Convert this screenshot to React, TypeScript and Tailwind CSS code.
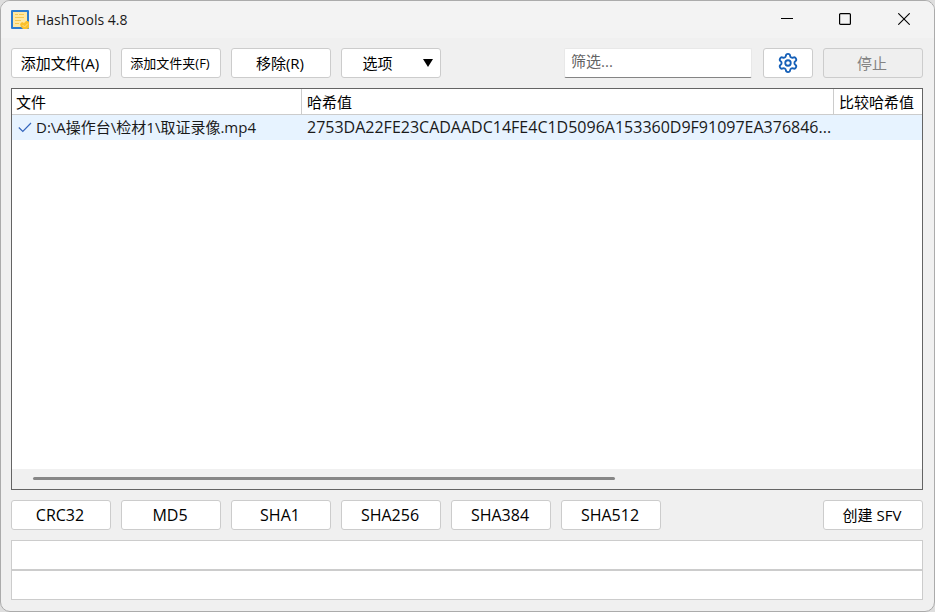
import { useState } from "react"
import type { ButtonHTMLAttributes } from "react"
import { Settings } from "lucide-react"
import { clsx } from "clsx"

type HashRow = {
  file: string
  hash: string
  compare: string
}

const ROWS: HashRow[] = [
  {
    file: "D:\\A操作台\\检材1\\取证录像.mp4",
    hash: "2753DA22FE23CADAADC14FE4C1D5096A153360D9F91097EA376846...",
    compare: "",
  },
]

const ALGORITHMS = ["CRC32", "MD5", "SHA1", "SHA256", "SHA384", "SHA512"]

function PushButton({ className, ...props }: ButtonHTMLAttributes<HTMLButtonElement>) {
  return (
    <button
      type="button"
      className={clsx(
        "flex h-[30px] shrink-0 items-center justify-center rounded-[3px] border border-[#cccccc] bg-white whitespace-nowrap text-black disabled:bg-[#efefef] disabled:text-[#838383]",
        className,
      )}
      {...props}
    />
  )
}

function AppIcon() {
  return (
    <svg viewBox="0 0 20 20" className="h-5 w-5 shrink-0" aria-hidden="true">
      <rect x="0" y="0" width="18" height="19" rx="1" fill="#2b7cd0" />
      <rect x="2" y="2" width="14" height="15" fill="#ffe8a3" />
      <path d="M4 4.500h3M8 4.500h5M4 7.500h9M4 10.500h6M4 13.500h4" stroke="#f7c951" />
      <path d="M9 14l2-2 2 1 2-2h2l1 1v6l-2 1h-4l-2-2z" fill="#fbc02d" />
      <path d="M11.500 15l2 2 3.500-3.500" fill="none" stroke="#ffdf80" />
    </svg>
  )
}

function TitleBar() {
  return (
    <header className="flex h-[37px] shrink-0 items-center bg-[#f3f3f3] pl-[10px]">
      <AppIcon />
      <h1 className="ml-[5px] flex-1 text-[14px] text-[#1a1a1a]">HashTools 4.8</h1>
      <div className="flex h-full pb-px">
        <button type="button" aria-label="最小化" className="flex w-[58px] items-center justify-center">
          <svg viewBox="0 0 12 12" className="h-3 w-3">
            <path d="M0 5.500h12" stroke="#000" />
          </svg>
        </button>
        <button type="button" aria-label="最大化" className="flex w-[58px] items-center justify-center">
          <svg viewBox="0 0 12 12" className="h-3 w-3">
            <rect x="0.600" y="0.600" width="10.800" height="10.800" rx="1" fill="none" stroke="#000" strokeWidth="1.200" />
          </svg>
        </button>
        <button type="button" aria-label="关闭" className="flex w-[60px] items-center justify-center">
          <svg viewBox="0 0 12 12" className="h-3 w-3">
            <path d="M0.300 0.300l11.400 11.400M11.700 0.300L0.300 11.700" stroke="#000" strokeWidth="1.100" />
          </svg>
        </button>
      </div>
    </header>
  )
}

function FileTable() {
  return (
    <div className="flex min-h-[200px] flex-1 flex-col border border-[#646464] bg-white">
      <div className="flex-1 overflow-hidden">
        <table className="w-full table-fixed border-separate border-spacing-0 text-left">
          <colgroup>
            <col className="w-[290px]" />
            <col />
            <col className="w-[88px]" />
          </colgroup>
          <thead>
            <tr className="h-[26px]">
              <th className="border-r border-b border-[#cccccc] px-1 font-normal">文件</th>
              <th className="border-r border-b border-[#cccccc] px-[5px] font-normal">哈希值</th>
              <th className="border-b border-[#cccccc] pl-[5px] font-normal whitespace-nowrap">比较哈希值</th>
            </tr>
          </thead>
          <tbody>
            {ROWS.map((row) => (
              <tr key={row.file} className="h-[25px] bg-[#e7f3ff] text-[#1a1a1a]">
                <td className="pb-0.5 pl-[6px]">
                  <div className="flex items-center gap-1 whitespace-nowrap">
                    <svg viewBox="0 0 14 14" className="h-3.5 w-3.5 shrink-0" aria-hidden="true">
                      <path d="M0.800 7.500l4 4L13 3" fill="none" stroke="#3566bd" strokeWidth="1.200" />
                    </svg>
                    {row.file}
                  </div>
                </td>
                <td className="overflow-hidden pb-0.5 pl-[5px] text-[16px] leading-5 whitespace-nowrap">{row.hash}</td>
                <td className="pb-0.5 pl-[5px]">{row.compare}</td>
              </tr>
            ))}
          </tbody>
        </table>
      </div>
      <div className="flex h-5 shrink-0 items-center bg-[#f0f0f0] px-[21px] pb-0.5">
        <div className="h-[3px] w-[67%] rounded-full bg-[#868686]" />
      </div>
    </div>
  )
}

export default function App() {
  const [filter, setFilter] = useState("")

  return (
    <div className="min-h-screen bg-[#dedede] font-['Open_Sans','Noto_Sans_CJK_SC',sans-serif] text-[15px] leading-5 text-black">
      <div className="flex min-h-screen flex-col overflow-hidden rounded-[10px] border border-[#ababab] bg-[#f0f0f0]">
        <TitleBar />
        <main className="flex flex-1 flex-col gap-[10px] pt-[10px] pr-[11px] pb-[11px] pl-[10px]">
          <div className="flex gap-[10px]">
            <PushButton className="w-[100px] pr-0.5">添加文件(A)</PushButton>
            <PushButton className="w-[100px] pr-0.5 text-[13px]">添加文件夹(F)</PushButton>
            <PushButton className="w-[100px] pr-0.5">移除(R)</PushButton>
            <PushButton className="w-[100px] gap-[30px] pl-[13px]" aria-haspopup="menu">
              选项
              <svg viewBox="0 0 10 8" className="h-2 w-2.5" aria-hidden="true">
                <path d="M0 0h10L5 8z" />
              </svg>
            </PushButton>
            <input
              type="text"
              aria-label="筛选"
              placeholder="筛选..."
              value={filter}
              onChange={(e) => setFilter(e.target.value)}
              className="mr-px ml-auto h-[30px] w-[188px] rounded-[2px] border border-[#e8e8e8] border-b-[#848484] bg-white px-[6px] pb-1 outline-none placeholder:text-[#646464]"
            />
            <PushButton className="w-[50px]" aria-label="设置">
              <Settings className="h-[22px] w-[22px] text-[#1660b8]" />
            </PushButton>
            <PushButton className="w-[100px] pr-0.5" disabled>
              停止
            </PushButton>
          </div>

          <FileTable />

          <div className="flex gap-[10px]">
            {ALGORITHMS.map((name) => (
              <PushButton key={name} className="w-[100px] pr-0.5 text-[16px]">
                {name}
              </PushButton>
            ))}
            <PushButton className="ml-auto w-[100px] pr-0.5">创建 SFV</PushButton>
          </div>

          <div className="flex flex-col">
            <input type="text" readOnly aria-label="哈希值" className="h-[30px] border border-[#cccccc] bg-white px-2 outline-none" />
            <input type="text" aria-label="比较哈希值" className="h-[30px] border border-[#cccccc] bg-white px-2 outline-none" />
          </div>
        </main>
      </div>
    </div>
  )
}
